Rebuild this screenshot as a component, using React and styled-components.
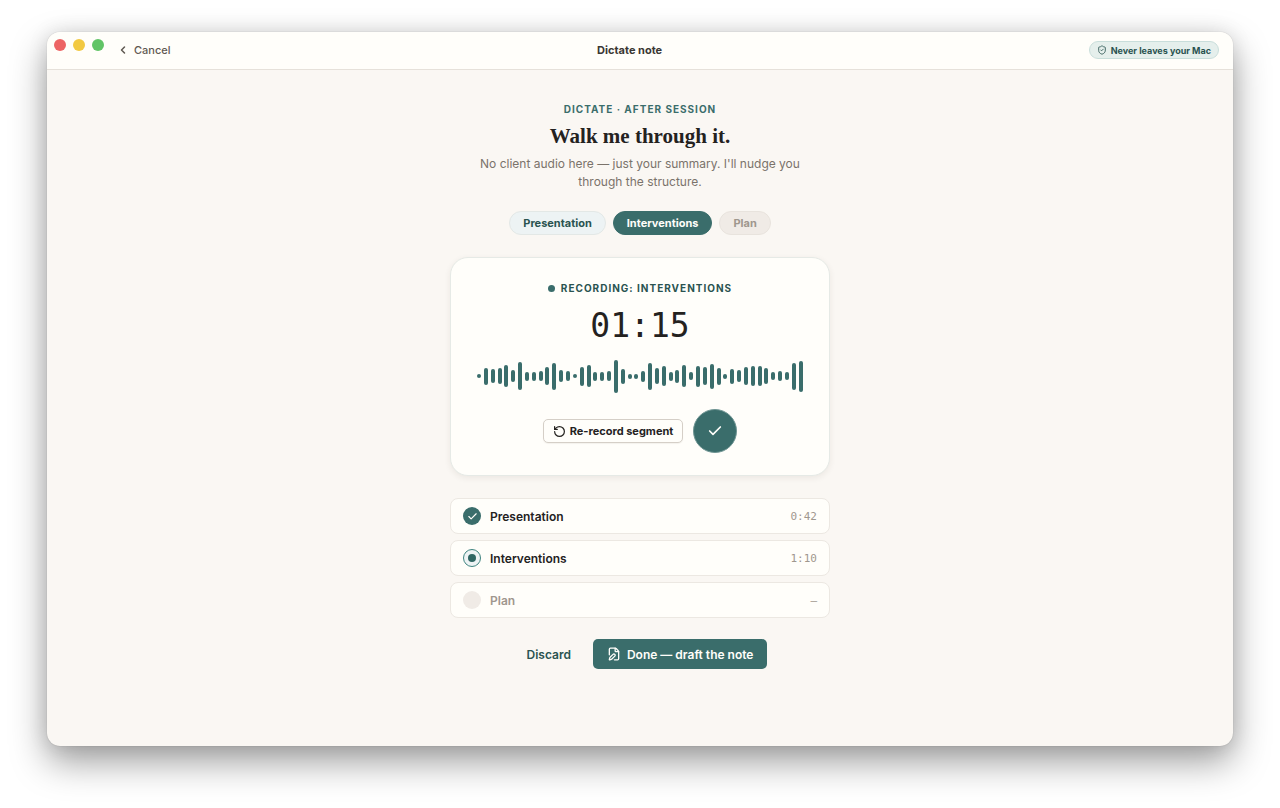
import React, { useState } from "react";
import styled, { createGlobalStyle, css } from "styled-components";
import { Check, ChevronLeft, FilePen, RotateCcw, ShieldCheck } from "lucide-react";

const GlobalStyle = createGlobalStyle`
  * {
    box-sizing: border-box;
  }
  body {
    margin: 0;
    background: #ffffff;
    color: #24221f;
    font-family: Inter, "Liberation Sans", sans-serif;
    -webkit-font-smoothing: antialiased;
  }
  button {
    font-family: inherit;
    cursor: pointer;
  }
`;

const Desktop = styled.div`
  display: flex;
  min-height: 100vh;
  padding: 32px 47px 62px;
`;

const Window = styled.div`
  flex: 1;
  display: flex;
  flex-direction: column;
  overflow: hidden;
  border-radius: 13px;
  background: #faf7f3;
  box-shadow: 0 0 1px rgba(0, 0, 0, 0.3), 0 16px 36px rgba(0, 0, 0, 0.38),
    0 0 20px rgba(0, 0, 0, 0.1);
`;

const TitleBar = styled.header`
  display: flex;
  align-items: center;
  justify-content: space-between;
  height: 38px;
  padding: 0 14px 1px 7px;
  background: #fffefa;
  border-bottom: 1px solid #e6e1da;
`;

const TitleBarLeft = styled.div`
  display: flex;
  align-items: center;
  gap: 13px;
  height: 100%;
`;

const Lights = styled.div`
  display: flex;
  align-self: flex-start;
  gap: 7px;
  padding-top: 7px;
`;

const Light = styled.span`
  width: 12px;
  height: 12px;
  border-radius: 50%;
  background: ${(props) => props.$color};
`;

const CancelButton = styled.button`
  display: flex;
  align-items: center;
  gap: 5px;
  padding: 0;
  border: 0;
  background: none;
  color: #5f5952;
  font-size: 11px;
  font-weight: 500;
`;

const WindowTitle = styled.h1`
  margin: 0;
  font-size: 11px;
  font-weight: 700;
  color: #3a3733;
`;

const PrivacyBadge = styled.span`
  display: flex;
  align-items: center;
  gap: 4px;
  height: 18px;
  padding: 0 7px;
  border: 1px solid #c9dedb;
  border-radius: 9px;
  background: #e5efec;
  color: #2a5350;
  font-size: 9px;
  font-weight: 700;
`;

const Content = styled.main`
  display: flex;
  flex-direction: column;
  align-items: center;
  width: 100%;
  max-width: 380px;
  margin: 0 auto;
  padding: 31px 0;
`;

const Eyebrow = styled.p`
  margin: 0;
  color: #3a6d6b;
  font-size: 10px;
  line-height: 16px;
  font-weight: 700;
  letter-spacing: 1px;
  text-transform: uppercase;
`;

const Heading = styled.h2`
  margin: 5px 0;
  font-family: "Liberation Serif", serif;
  font-size: 21px;
  line-height: 28px;
  font-weight: 700;
`;

const Lead = styled.p`
  max-width: 332px;
  margin: 0 0 20px;
  color: #7a736b;
  font-size: 12px;
  line-height: 18px;
  text-align: center;
`;

const Chips = styled.div`
  display: flex;
  gap: 7px;
  margin-bottom: 22px;
`;

const chipTones = {
  done: css`
    background: #edf3f4;
    border-color: #e3e8e6;
    color: #2a5350;
  `,
  active: css`
    background: #3a6d6b;
    border-color: #3a6d6b;
    color: #fffefa;
  `,
  pending: css`
    background: #f0ebe6;
    border-color: #e8e3dd;
    color: #9f978e;
  `,
};

const Chip = styled.button`
  height: 24px;
  padding: 0 13px;
  border: 1px solid;
  border-radius: 12px;
  font-size: 11px;
  font-weight: 700;
  ${(props) => chipTones[props.$status]}
`;

const Recorder = styled.section`
  display: flex;
  flex-direction: column;
  align-items: center;
  width: 100%;
  padding: 22px 26px;
  border: 1px solid #e6eae6;
  border-radius: 18px;
  background: #fffefa;
  box-shadow: 0 2px 6px rgba(60, 50, 40, 0.08);
`;

const RecordingLabel = styled.p`
  display: flex;
  align-items: center;
  gap: 6px;
  margin: 0;
  color: #2a5350;
  font-size: 10px;
  line-height: 16px;
  font-weight: 700;
  letter-spacing: 1px;
  text-transform: uppercase;

  &::before {
    content: "";
    width: 7px;
    height: 7px;
    border-radius: 50%;
    background: #3a6d6b;
  }
`;

const Timer = styled.time`
  margin-top: 10px;
  font-family: "DejaVu Sans Mono", monospace;
  font-size: 33px;
  line-height: 40px;
`;

const Wave = styled.div`
  display: flex;
  align-items: center;
  justify-content: space-between;
  width: 100%;
  height: 36px;
  margin: 12px 0 15px;
`;

const WaveBar = styled.span`
  width: 4px;
  border-radius: 2px;
  background: #3a6d6b;
`;

const Controls = styled.div`
  display: flex;
  align-items: center;
  gap: 10px;
`;

const RerecordButton = styled.button`
  display: flex;
  align-items: center;
  gap: 4px;
  height: 24px;
  padding: 0 9px;
  border: 1px solid #d5cfc7;
  border-radius: 5px;
  background: #fffefa;
  color: #24221f;
  font-size: 11px;
  font-weight: 700;
  box-shadow: 0 1px 1px rgba(60, 50, 40, 0.06);
`;

const ConfirmButton = styled.button`
  display: grid;
  place-items: center;
  width: 44px;
  height: 44px;
  padding: 0;
  border: 1px solid #6f9593;
  border-radius: 50%;
  background: #3a6d6b;
  color: #fffefa;
`;

const Segments = styled.ul`
  display: flex;
  flex-direction: column;
  gap: 6px;
  width: 100%;
  margin: 22px 0 21px;
  padding: 0;
  list-style: none;
`;

const Segment = styled.li`
  display: flex;
  align-items: center;
  gap: 9px;
  height: 36px;
  padding: 0 12px;
  border: 1px solid #ece8e2;
  border-radius: 8px;
  background: #fffefa;
  color: ${(props) => (props.$status === "pending" ? "#9f978e" : "#24221f")};
  font-size: 12px;
  font-weight: 600;
`;

const markerTones = {
  done: css`
    background: #3a6d6b;
    color: #fffefa;
  `,
  active: css`
    border: 1px solid #3f8480;
    background: #edf3f4;

    &::before {
      content: "";
      width: 8px;
      height: 8px;
      border-radius: 50%;
      background: #2f6663;
    }
  `,
  pending: css`
    background: #f0ebe6;
  `,
};

const Marker = styled.span`
  display: grid;
  place-items: center;
  width: 18px;
  height: 18px;
  border-radius: 50%;
  ${(props) => markerTones[props.$status]}
`;

const Duration = styled.span`
  margin-left: auto;
  color: #9f978e;
  font-family: "DejaVu Sans Mono", monospace;
  font-size: 11px;
  font-weight: 400;
`;

const Actions = styled.div`
  display: flex;
  align-items: center;
  gap: 8px;
`;

const ActionButton = styled.button`
  display: flex;
  align-items: center;
  gap: 6px;
  height: 30px;
  padding: 0 14px;
  border: 0;
  border-radius: 5px;
  background: ${(props) => (props.$primary ? "#3a6d6b" : "transparent")};
  color: ${(props) => (props.$primary ? "#fffefa" : "#2a5350")};
  font-size: 12px;
  font-weight: 600;
`;

const lights = ["#ed6464", "#f2c941", "#61c466"];

const levels = [
  4, 17, 14, 16, 22, 12, 28, 9, 9, 10, 18, 27, 12, 10, 4, 19, 22, 9, 9, 10, 33,
  15, 5, 5, 11, 27, 16, 20, 9, 13, 22, 8, 21, 18, 25, 17, 5, 15, 12, 18, 20, 20,
  16, 8, 10, 8, 27, 31,
];

const segments = [
  { name: "Presentation", duration: "0:42" },
  { name: "Interventions", duration: "1:10" },
  { name: "Plan", duration: "—" },
];

const App = () => {
  const [current, setCurrent] = useState(1);

  const statusOf = (index) => {
    if (index === current) return "active";
    return index < current ? "done" : "pending";
  };

  return (
    <>
      <GlobalStyle />
      <Desktop>
        <Window>
          <TitleBar>
            <TitleBarLeft>
              <Lights>
                {lights.map((color) => (
                  <Light key={color} $color={color} />
                ))}
              </Lights>
              <CancelButton type="button">
                <ChevronLeft size={12} strokeWidth={3} />
                Cancel
              </CancelButton>
            </TitleBarLeft>
            <WindowTitle>Dictate note</WindowTitle>
            <PrivacyBadge>
              <ShieldCheck size={10} />
              Never leaves your Mac
            </PrivacyBadge>
          </TitleBar>

          <Content>
            <Eyebrow>Dictate · After session</Eyebrow>
            <Heading>Walk me through it.</Heading>
            <Lead>
              No client audio here — just your summary. I'll nudge you through
              the structure.
            </Lead>

            <Chips>
              {segments.map(({ name }, index) => (
                <Chip
                  key={name}
                  type="button"
                  $status={statusOf(index)}
                  onClick={() => setCurrent(index)}
                >
                  {name}
                </Chip>
              ))}
            </Chips>

            <Recorder>
              <RecordingLabel>Recording: {segments[current].name}</RecordingLabel>
              <Timer>01:15</Timer>
              <Wave>
                {levels.map((level, index) => (
                  <WaveBar key={index} style={{ height: level }} />
                ))}
              </Wave>
              <Controls>
                <RerecordButton type="button">
                  <RotateCcw size={13} strokeWidth={2.25} />
                  Re-record segment
                </RerecordButton>
                <ConfirmButton type="button" aria-label="Finish segment">
                  <Check size={16} strokeWidth={2.5} />
                </ConfirmButton>
              </Controls>
            </Recorder>

            <Segments>
              {segments.map(({ name, duration }, index) => (
                <Segment key={name} $status={statusOf(index)}>
                  <Marker $status={statusOf(index)}>
                    {statusOf(index) === "done" && (
                      <Check size={11} strokeWidth={2.5} />
                    )}
                  </Marker>
                  {name}
                  <Duration>{duration}</Duration>
                </Segment>
              ))}
            </Segments>

            <Actions>
              <ActionButton type="button">Discard</ActionButton>
              <ActionButton type="button" $primary>
                <FilePen size={14} strokeWidth={2.25} />
                Done — draft the note
              </ActionButton>
            </Actions>
          </Content>
        </Window>
      </Desktop>
    </>
  );
};

export default App;
